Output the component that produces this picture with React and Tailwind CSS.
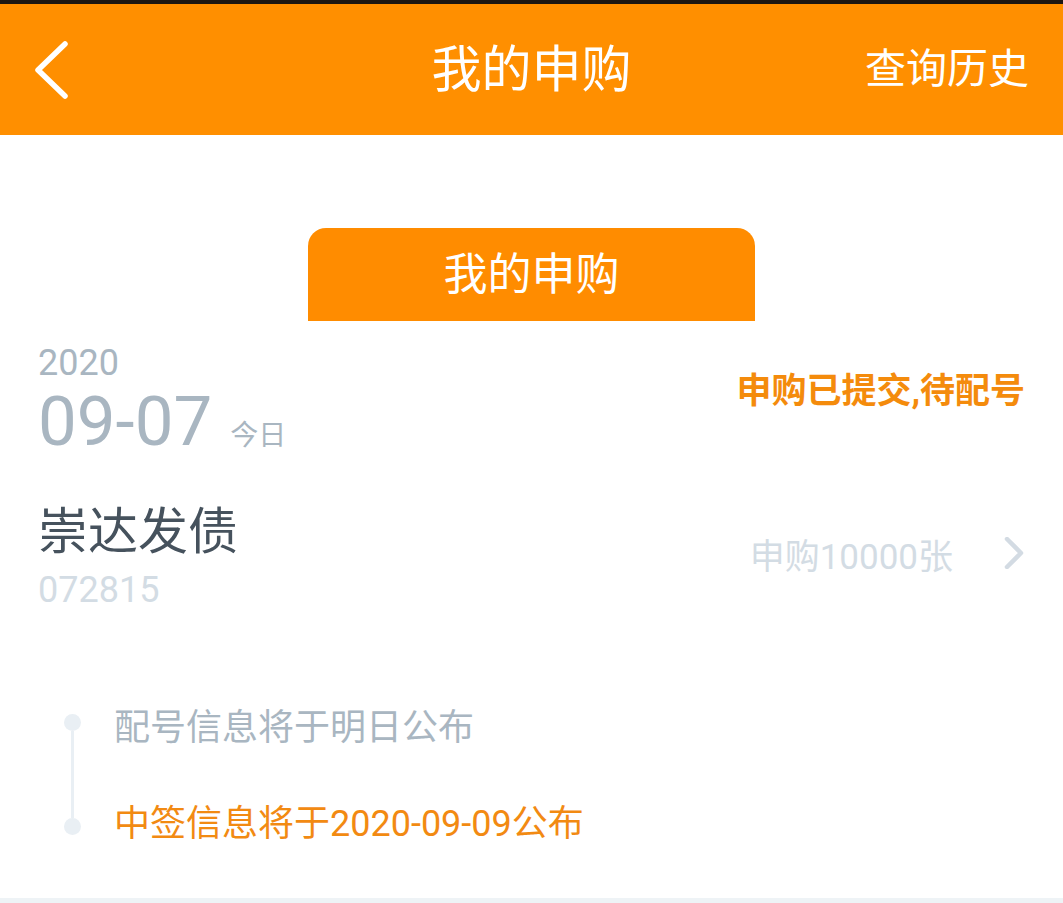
const font = { fontFamily: 'Roboto, "Noto Sans CJK SC", sans-serif' }

function BackIcon() {
  return (
    <svg width="40" height="60" viewBox="0 0 40 60" fill="none">
      <path d="M33 4 L6 30 L33 56" stroke="#fff" strokeWidth="5.5" strokeLinecap="round" strokeLinejoin="round" />
    </svg>
  )
}

function ChevronRight() {
  return (
    <svg width="26" height="32" viewBox="0 0 26 32" fill="none">
      <path d="M8 2 L22 16 L8 30" stroke="#d3dbe3" strokeWidth="4.5" strokeLinecap="round" strokeLinejoin="round" />
    </svg>
  )
}

export default function App() {
  return (
    <div className="w-[1063px] h-[903px] bg-white flex flex-col overflow-hidden" style={font}>
      <div className="h-[4px] bg-[#1c1612]" />
      <header className="h-[131px] bg-[#ff8f00] grid grid-cols-[1fr_auto_1fr] items-center px-[32px]">
        <div className="flex items-center">
          <BackIcon />
        </div>
        <h1 className="text-[50px] text-white leading-none">我的申购</h1>
        <div className="flex justify-end pr-[2px]">
          <span className="text-[41px] text-white leading-none">查询历史</span>
        </div>
      </header>

      <div className="flex justify-center mt-[93px]">
        <div className="w-[447px] h-[93px] bg-[#ff8c00] rounded-t-[18px] flex items-center justify-center">
          <span className="text-[44px] text-white leading-none">我的申购</span>
        </div>
      </div>

      <section className="px-[38px] pt-[24px]">
        <div className="flex items-start justify-between">
          <div className="flex flex-col">
            <span className="text-[36px] leading-[36px] text-[#a9b6c1]">2020</span>
            <div className="flex items-baseline gap-[18px]">
              <span className="text-[69px] leading-[82px] text-[#a9b6c1]">09-07</span>
              <span className="text-[28px] text-[#a9b6c1] leading-none">今日</span>
            </div>
          </div>
          <span className="mt-[29px] text-[35px] font-bold text-[#f48b0c] leading-none">申购已提交,待配号</span>
        </div>

        <div className="flex items-start justify-between mt-[39px]">
          <div className="flex flex-col">
            <span className="text-[50px] leading-[60px] text-[#46525d]">崇达发债</span>
            <span className="mt-[8px] text-[36px] leading-[40px] text-[#d3dce4]">072815</span>
          </div>
          <div className="flex items-start gap-[46px] mt-[38px]">
            <span className="text-[35px] leading-none text-[#d3dce4]">申购10000张</span>
            <div className="-mt-[3px]">
              <ChevronRight />
            </div>
          </div>
        </div>
      </section>

      <section className="pl-[64px] mt-[93px] flex">
        <div className="flex flex-col items-center w-[17px] pt-[11px]">
          <div className="w-[17px] h-[17px] rounded-full bg-[#e9eff4]" />
          <div className="w-[3px] h-[87px] bg-[#e9eff4]" />
          <div className="w-[17px] h-[17px] rounded-full bg-[#e9eff4]" />
        </div>
        <div className="flex flex-col pl-[33px]">
          <span className="text-[36px] leading-[50px] text-[#a9b6c1]">配号信息将于明日公布</span>
          <span className="text-[36px] leading-[50px] text-[#f28a12] mt-[46px]">中签信息将于2020-09-09公布</span>
        </div>
      </section>

      <div className="flex-1" />
      <div className="h-[5px] bg-[#eef3f6]" />
    </div>
  )
}
